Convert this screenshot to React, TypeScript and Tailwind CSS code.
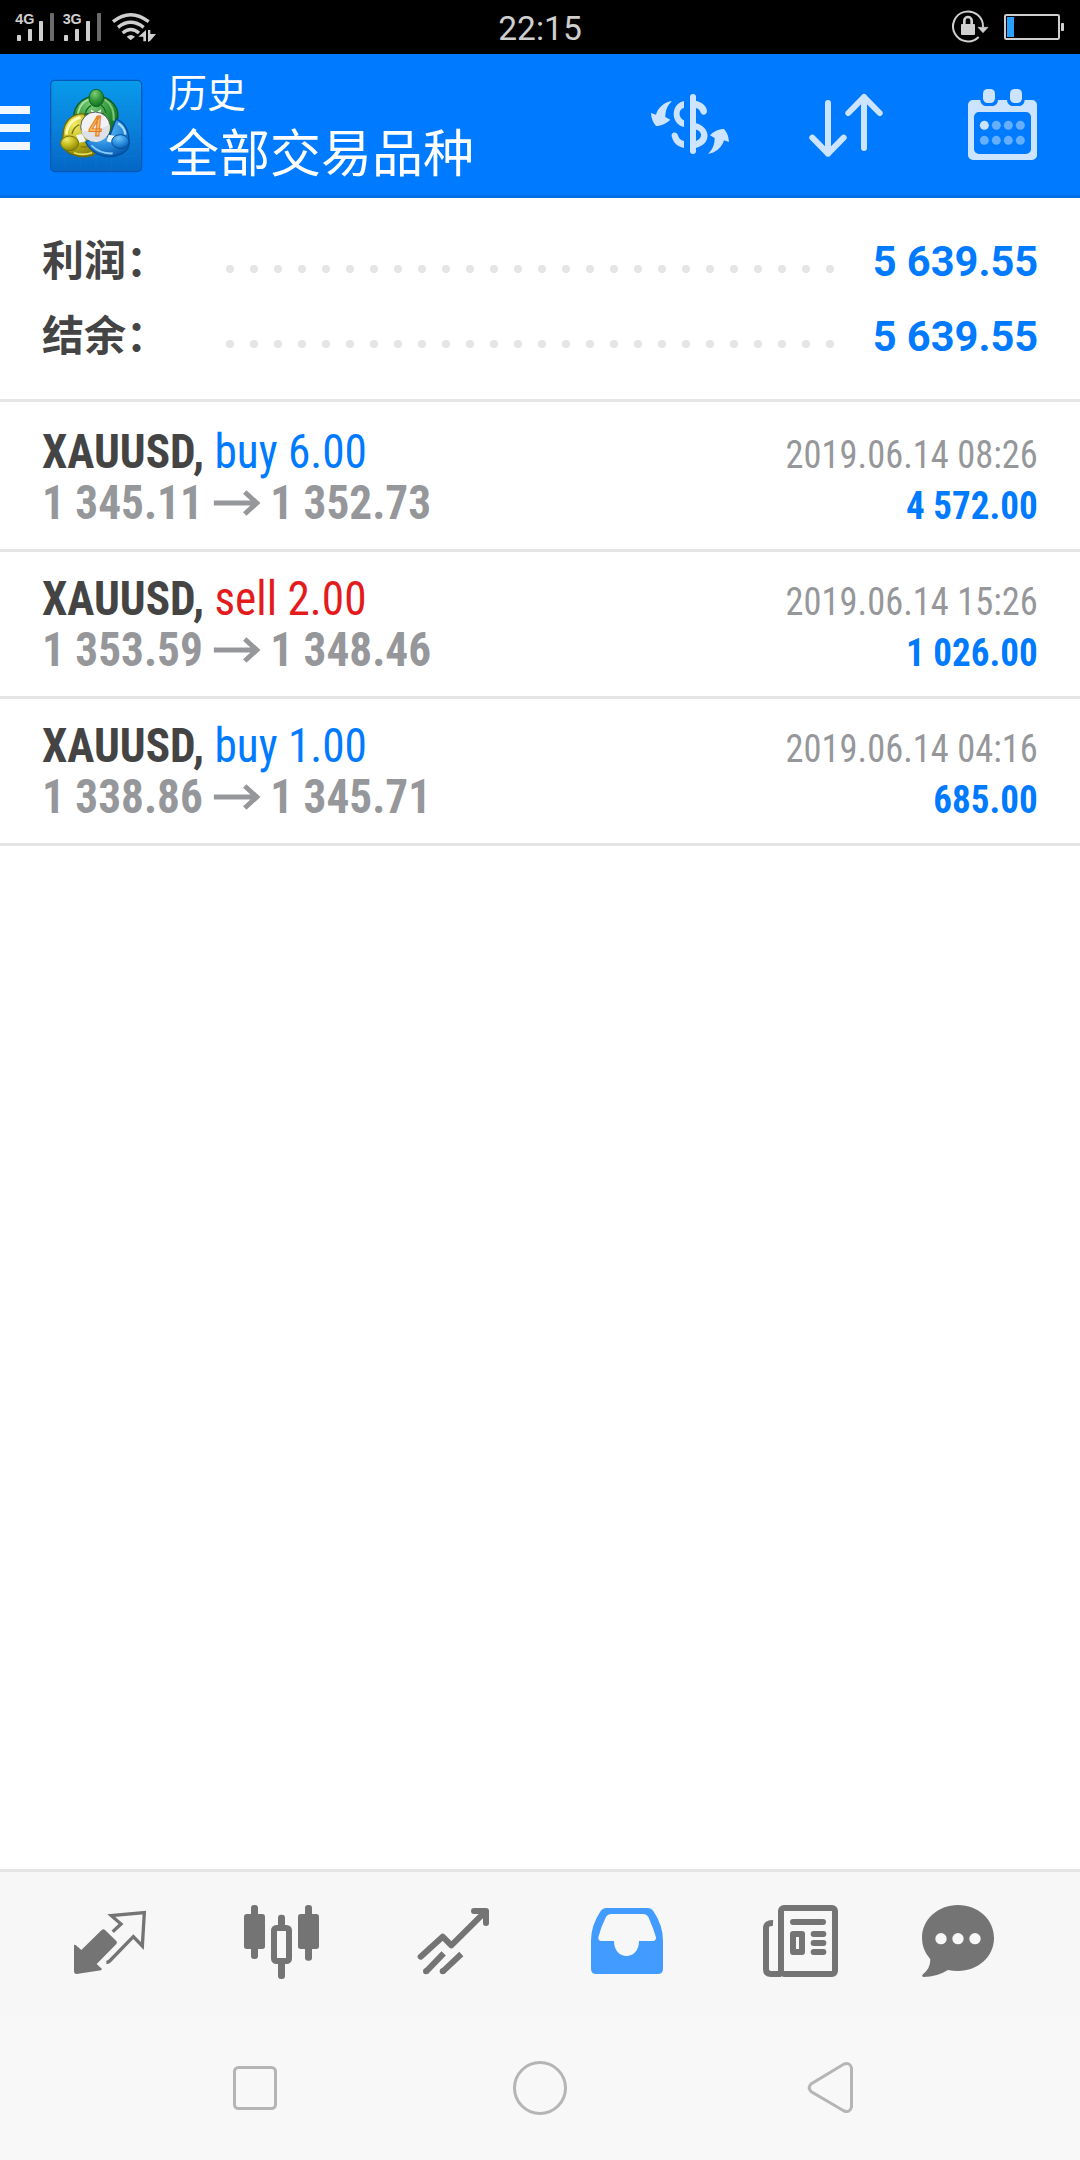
import React from 'react';

interface Deal {
  symbol: string;
  side: 'buy' | 'sell';
  volume: string;
  open: string;
  close: string;
  time: string;
  profit: string;
}

const deals: Deal[] = [
  { symbol: 'XAUUSD', side: 'buy', volume: '6.00', open: '1 345.11', close: '1 352.73', time: '2019.06.14 08:26', profit: '4 572.00' },
  { symbol: 'XAUUSD', side: 'sell', volume: '2.00', open: '1 353.59', close: '1 348.46', time: '2019.06.14 15:26', profit: '1 026.00' },
  { symbol: 'XAUUSD', side: 'buy', volume: '1.00', open: '1 338.86', close: '1 345.71', time: '2019.06.14 04:16', profit: '685.00' }
];

const summary = [
  { label: '利润：', value: '5 639.55' },
  { label: '结余：', value: '5 639.55' }
];

const StatusBar = () => (
  <div className="flex h-[54px] items-center justify-between bg-black">
    <svg className="h-[54px] w-[440px]" viewBox="0 0 1320 162" fill="#cfcfcf">
      <text x="46" y="71" fontSize="43" fontWeight="700" fontFamily="Liberation Sans, sans-serif">4G</text>
      <rect x="51" y="105" width="12" height="18" rx="2" />
      <rect x="84" y="87" width="12" height="36" rx="2" />
      <rect x="117" y="63" width="12" height="60" rx="2" />
      <rect x="150" y="39" width="12" height="84" rx="2" fill="#6b6b6b" />
      <text x="188" y="71" fontSize="43" fontWeight="700" fontFamily="Liberation Sans, sans-serif">3G</text>
      <rect x="192" y="105" width="12" height="18" rx="2" />
      <rect x="225" y="87" width="12" height="36" rx="2" />
      <rect x="258" y="63" width="12" height="60" rx="2" />
      <rect x="291" y="39" width="12" height="84" rx="2" fill="#6b6b6b" />
      <g fill="none" stroke="#cfcfcf" strokeWidth="10">
        <path d="M339 65Q392 23 446 65" />
        <path d="M354 82Q392 52 431 82" />
        <path d="M368 99Q392 78 417 99" />
      </g>
      <path d="M380 110Q392 100 405 110L392 121z" />
      <path d="M438 90V124H430V110H415zM444 90H451V102H468L451 122L444 126z" />
    </svg>
    <span className="pt-[3px] font-['Roboto',sans-serif] text-[33.5px] leading-[51px] text-[#cfcfcf]">22:15</span>
    <svg className="h-[54px] w-[440px]" viewBox="60 0 1320 162">
      <path d="M1076 111A45 45 0 1 1 1089 81" fill="none" stroke="#cfcfcf" strokeWidth="6" />
      <path d="M1074 82H1104L1089 98z" fill="#cfcfcf" stroke="#cfcfcf" strokeWidth="2" />
      <rect x="1023" y="72" width="42" height="33" rx="3" fill="#cfcfcf" />
      <path d="M1033 74V62A11 11 0 0 1 1055 62V74" fill="none" stroke="#cfcfcf" strokeWidth="8" />
      <rect x="1155" y="45" width="162" height="72" rx="4" fill="none" stroke="#cfcfcf" strokeWidth="6" />
      <rect x="1161" y="51" width="21" height="60" fill="#2ba0ff" />
      <rect x="1323" y="69" width="9" height="24" rx="2" fill="#cfcfcf" />
    </svg>
  </div>
);

const AppLogo = () => (
  <svg className="h-[96px] w-[96px]" viewBox="0 0 288 288">
    <defs>
      <linearGradient id="tile" x1="0" y1="0" x2="0" y2="1">
        <stop offset="0" stopColor="#079bec" />
        <stop offset="0.5" stopColor="#0a82dc" />
        <stop offset="1" stopColor="#0466c4" />
      </linearGradient>
      <radialGradient id="green" cx="0.4" cy="0.25" r="0.8">
        <stop offset="0" stopColor="#7ccf76" />
        <stop offset="0.5" stopColor="#35993c" />
        <stop offset="1" stopColor="#0d6a20" />
      </radialGradient>
      <radialGradient id="yellow" cx="0.35" cy="0.25" r="0.8">
        <stop offset="0" stopColor="#f2ec6a" />
        <stop offset="0.5" stopColor="#c4b91c" />
        <stop offset="1" stopColor="#84800a" />
      </radialGradient>
      <radialGradient id="blue" cx="0.4" cy="0.25" r="0.8">
        <stop offset="0" stopColor="#74c4f8" />
        <stop offset="0.55" stopColor="#2a8ede" />
        <stop offset="1" stopColor="#0656ac" />
      </radialGradient>
    </defs>
    <rect x="8" y="7" width="273" height="274" rx="13" fill="url(#tile)" stroke="#0558b4" strokeWidth="4" />
    <g stroke="#3aa8ee" strokeOpacity="0.15" strokeWidth="2">
      <path d="M52 10V278M98 10V278M144 10V278M190 10V278M236 10V278M10 52H278M10 98H278M10 144H278M10 190H278M10 236H278" />
    </g>
    {/* green figure */}
    <path d="M80 136C68 92 98 56 144 54C190 56 218 90 207 130C204 148 196 160 184 168L166 108H110Z" fill="url(#green)" stroke="#0b5a20" strokeWidth="4" />
    <path d="M89 118Q90 78 122 64" fill="none" stroke="#a4e09e" strokeWidth="6" />
    <path d="M170 64Q200 84 197 128" fill="none" stroke="#7cc878" strokeWidth="6" />
    <path d="M112 104Q118 88 130 82M174 104Q170 90 160 82" fill="none" stroke="#126a24" strokeWidth="4" />
    {/* yellow figure */}
    <path d="M110 108C74 104 46 130 45 170L42 198C50 228 96 244 134 232L150 216L112 178Z" fill="url(#yellow)" stroke="#6c6c08" strokeWidth="4" />
    <path d="M55 170Q58 128 98 118" fill="none" stroke="#fffbb0" strokeWidth="8" />
    <path d="M78 224Q102 234 132 224" fill="none" stroke="#e8e060" strokeWidth="5" />
    <path d="M72 168Q76 148 94 140M98 206Q112 210 124 202" fill="none" stroke="#7c7a0c" strokeWidth="4" />
    {/* blue figure */}
    <path d="M112 190C128 224 164 242 202 234C232 226 248 210 243 184C240 152 226 130 204 124L186 172Z" fill="url(#blue)" stroke="#0450a0" strokeWidth="4" />
    <path d="M210 136Q230 148 232 170" fill="none" stroke="#a8dcff" strokeWidth="7" />
    <path d="M130 202Q156 228 194 226" fill="none" stroke="#84ccfa" strokeWidth="6" />
    <path d="M128 94L144 104L160 94L156 110H132zM84 172L102 168L114 190L94 194zM202 174L182 170L176 190L196 196z" fill="#eef6fa" />
    <ellipse cx="145" cy="60" rx="22" ry="26" fill="url(#green)" stroke="#0b6420" strokeWidth="3" />
    <ellipse cx="65" cy="196" rx="27" ry="22" fill="url(#yellow)" stroke="#77750a" strokeWidth="3" />
    <ellipse cx="217" cy="191" rx="26" ry="21" fill="url(#blue)" stroke="#0450a0" strokeWidth="3" />
    <circle cx="142" cy="146" r="44" fill="#f2f2f5" stroke="#555e58" strokeWidth="3" />
    <path d="M99 157Q142 167 185 139A43 43 0 0 1 99 157z" fill="#dfe1e8" />
    <text transform="translate(140 174) skewX(-5)" textAnchor="middle" fontSize="84" fontWeight="500" fontFamily="Roboto Condensed, Roboto, sans-serif" fill="#ffbe5c" stroke="#e07a28" strokeWidth="3">4</text>
  </svg>
);

const Header = () => (
  <div className="flex h-[144px] items-start border-b-[3px] border-[#006fe6] bg-[#007aff]">
    <div className="mt-[52px] flex w-[30px] flex-col gap-[10px]">
      <div className="h-[8px] bg-[#f0f7ff]" />
      <div className="h-[8px] bg-[#f0f7ff]" />
      <div className="h-[8px] bg-[#f0f7ff]" />
    </div>
    <div className="mt-[24px] ml-[18px]">
      <AppLogo />
    </div>
    <div className="ml-[24px] flex-1 font-['Noto_Sans_CJK_SC',sans-serif] text-white">
      <div className="mt-[9px] text-[39px] leading-[54px]">历史</div>
      <div className="text-[51px] leading-[66px]">全部交易品种</div>
    </div>
    <div className="mt-[26px] mr-[33px] flex gap-[66px]">
      {/* currency */}
      <svg className="h-[90px] w-[90px]" viewBox="75 240 270 270" fill="#cce4ff">
        <path d="M156 303C134 306 114 322 108 344L93 339C94 356 99 368 108 378C124 378 140 370 151 359L136 351C136 332 142 316 156 303z" />
        <path d="M264 462C286 459 306 443 312 421L327 426C326 409 321 397 312 387C296 387 280 395 270 406L284 414C284 433 278 449 264 462z" />
        <path d="M192 303V323C174 328 174 353 192 361V381C151 372 151 311 192 303zM156 412C150 398 168 392 173 404C176 414 182 421 192 423V444C173 440 160 429 156 412z" />
        <rect x="210" y="282" width="18" height="180" rx="9" />
        <path d="M226 302C246 306 260 318 261 333C261 343 250 349 243 340C240 330 235 325 226 323zM226 369C274 380 276 434 226 444V424C250 416 248 394 226 388z" />
      </svg>
      {/* sort */}
      <svg className="h-[90px] w-[90px]" viewBox="543 240 270 270" fill="none" stroke="#cce4ff" strokeWidth="18" strokeLinecap="round" strokeLinejoin="round">
        <path d="M624 309V461M577 413L624 461L671 413" />
        <path d="M732 444V291M685 339L732 291L779 339" />
      </svg>
      {/* calendar */}
      <svg className="h-[90px] w-[90px]" viewBox="1011 240 270 270" fill="#cce4ff">
        <path fillRule="evenodd" d="M1059 300H1081C1082 312 1090 318 1100 318H1114C1126 318 1133 312 1134 300H1161C1162 312 1170 318 1180 318H1195C1206 318 1213 312 1214 300H1236A15 15 0 0 1 1251 315V465A15 15 0 0 1 1236 480H1059A15 15 0 0 1 1044 465V315A15 15 0 0 1 1059 300zM1077 336A15 15 0 0 0 1062 351V447A15 15 0 0 0 1077 462H1218A15 15 0 0 0 1233 447V351A15 15 0 0 0 1218 336z" />
        <rect x="1089" y="267" width="36" height="42" rx="14" />
        <rect x="1170" y="267" width="36" height="42" rx="14" />
        <circle cx="1093" cy="376" r="13.5" />
        <g fill="#66afff">
          <circle cx="1129" cy="376" r="13.5" />
          <circle cx="1165" cy="376" r="13.5" />
          <circle cx="1201" cy="376" r="13.5" />
          <circle cx="1093" cy="421" r="13.5" />
          <circle cx="1129" cy="421" r="13.5" />
          <circle cx="1165" cy="421" r="13.5" />
          <circle cx="1201" cy="421" r="13.5" />
        </g>
      </svg>
    </div>
  </div>
);

const SummaryRow = ({ label, value }: { label: string; value: string }) => (
  <div className="flex h-[75px] items-start">
    <div className="-mt-[4px] w-[184px] font-['Noto_Sans_CJK_SC',sans-serif] text-[42px] leading-[75px] font-bold text-[#444444]">{label}</div>
    <div className="mt-[41px] flex gap-[16px]">
      {Array.from({ length: 26 }).map((_, i) => (
        <div key={i} className="h-[8px] w-[8px] rounded-full bg-[#e5e5e5]" />
      ))}
    </div>
    <div className="ml-auto origin-right scale-x-[0.99] font-['Roboto',sans-serif] text-[42px] leading-[75px] font-bold text-[#007aff]">{value}</div>
  </div>
);

const DealRow = ({ deal }: { deal: Deal }) => (
  <div className="flex h-[147px] justify-between border-b-[3px] border-[#e5e5e5] px-[42px] pt-[21px] font-['Roboto_Condensed','Roboto',sans-serif] [font-stretch:75%]">
    <div className="origin-left scale-x-[0.943] text-[48px] leading-[51px] whitespace-pre">
      <div>
        <span className="font-bold text-[#444444]">{deal.symbol}, </span>
        <span className={deal.side === 'buy' ? 'text-[#007aff]' : 'text-[#e31b1d]'}>
          {deal.side} {deal.volume}
        </span>
      </div>
      <div className="flex items-center font-bold text-[#96979b]">
        <span className="w-[182px]">{deal.open}</span>
        <svg className="mr-[10px] h-[28px] w-[50px]" viewBox="0 0 47 28" preserveAspectRatio="none" fill="none" stroke="#96979b" strokeWidth="5">
          <path d="M0 14H43M31 3L43 14L31 25" />
        </svg>
        <span>{deal.close}</span>
      </div>
    </div>
    <div className="pt-[4px] text-right text-[39px] leading-[51px]">
      <div className="origin-right scale-x-[0.935] text-[#96979b]">{deal.time}</div>
      <div className="origin-right scale-x-[0.95] font-bold text-[#007aff]">{deal.profit}</div>
    </div>
  </div>
);

const TabBar = () => (
  <div className="flex h-[147px] gap-[83px] border-t-[3px] border-[#e5e5e5] bg-[#f7f7f7] pt-[24px] pl-[63px]">
    {/* quotes */}
    <svg className="h-[90px] w-[90px]" viewBox="69 108 270 270" fill="#747474">
      <path d="M102 254L107 255L124 270L185 210Q190 205 195 210L229 243Q233 248 229 252L170 312L186 327L183 331L110 342Q102 342 102 334z" />
      <path d="M218 215L243 192L214 167L313 158L307 258L280 230L209 303Q205 307 199 307" fill="none" stroke="#747474" strokeWidth="10" />
    </svg>
    {/* charts */}
    <svg className="h-[90px] w-[90px]" viewBox="588 108 270 270" fill="#747474">
      <rect x="612" y="162" width="63" height="105" rx="8" />
      <rect x="633" y="135" width="21" height="162" rx="9" />
      <rect x="774" y="162" width="63" height="105" rx="8" />
      <rect x="795" y="135" width="21" height="167" rx="9" />
      <rect x="714" y="164" width="21" height="40" rx="9" />
      <rect x="714" y="300" width="21" height="57" rx="9" />
      <rect x="702" y="204" width="45" height="99" rx="7" fill="none" stroke="#747474" strokeWidth="18" />
    </svg>
    {/* trade */}
    <svg className="h-[90px] w-[90px]" viewBox="1107 108 270 270" fill="none" stroke="#747474" strokeWidth="18" strokeLinejoin="round">
      <path d="M1142 290L1208 230L1234 256L1336 155" strokeLinecap="round" />
      <path d="M1302 153H1338V189" strokeLinecap="round" />
      <path d="M1211 280L1158 335M1264 282L1208 335" />
      <path d="M1158 334H1158.1M1208 334H1208.1" strokeLinecap="round" />
    </svg>
    {/* history */}
    <svg className="h-[90px] w-[90px]" viewBox="126 108 270 270" fill="#429bff">
      <path fillRule="evenodd" d="M200 144H322Q334 144 340 153Q369 196 369 242V326Q369 342 353 342H169Q153 342 153 326V242Q153 196 182 153Q188 144 200 144zM213 162Q203 162 198 170Q184 198 175 232Q174 243 184 243H222C222 303 297 303 297 243H338Q349 243 348 232Q340 204 325 171Q320 162 308 162z" />
    </svg>
    {/* news */}
    <svg className="h-[90px] w-[90px]" viewBox="645 108 270 270" fill="none" stroke="#747474" strokeWidth="18">
      <rect x="723" y="144" width="162" height="198" rx="9" />
      <path d="M699 189Q678 188 678 204V328Q678 342 693 342H723" />
      <path d="M759 186H849M821 222H850M821 249H850M821 276H850" strokeLinecap="round" />
      <rect x="759" y="222" width="27" height="54" strokeLinejoin="round" />
    </svg>
    {/* chat */}
    <svg className="-ml-[15px] h-[90px] w-[90px]" viewBox="1119 108 270 270" fill="#747474">
      <path d="M1254 135C1314 135 1362 178 1362 234C1362 290 1314 333 1254 333Q1238 333 1224 330Q1190 351 1151 351Q1143 349 1149 343Q1171 326 1171 298Q1146 270 1146 234C1146 178 1194 135 1254 135z" />
      <g fill="#f7f7f7">
        <circle cx="1203" cy="236" r="17" />
        <circle cx="1254" cy="236" r="17" />
        <circle cx="1305" cy="236" r="17" />
      </g>
    </svg>
  </div>
);

const NavBar = () => (
  <div className="flex h-[144px] justify-between bg-[#f8f8f8] px-[222px] pt-[42px]">
    <svg className="h-[60px] w-[60px]" viewBox="-6 0 60 60" fill="none" stroke="#b5b5b5" strokeWidth="3">
      <rect x="6.5" y="9.5" width="41" height="41" rx="4" />
    </svg>
    <svg className="h-[60px] w-[60px]" viewBox="0 0 60 60" fill="none" stroke="#b5b5b5" strokeWidth="3">
      <circle cx="30" cy="30" r="25.5" />
    </svg>
    <svg className="h-[60px] w-[60px]" viewBox="-3 0 60 60" fill="none" stroke="#b5b5b5" strokeWidth="3">
      <path d="M50.5 10V49Q49 55 43 53L10 33.5Q6.5 29.5 10 26L43 6Q49 4 50.5 10z" />
    </svg>
  </div>
);

const App: React.FC = () => {
  return (
    <div className="flex h-[2160px] w-[1080px] flex-col overflow-hidden bg-white">
      <StatusBar />
      <Header />
      <div className="h-[204px] border-b-[3px] border-[#e5e5e5] px-[42px] pt-[26px]">
        {summary.map((row) => (
          <SummaryRow key={row.label} label={row.label} value={row.value} />
        ))}
      </div>
      <div className="flex-1 pt-[3px]">
        {deals.map((deal) => (
          <DealRow key={deal.time} deal={deal} />
        ))}
      </div>
      <TabBar />
      <NavBar />
    </div>
  );
};

export default App;
